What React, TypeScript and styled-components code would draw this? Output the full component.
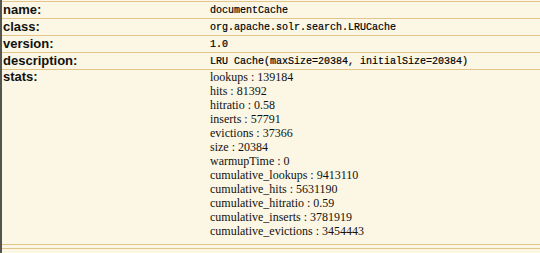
import React from 'react';
import styled, { createGlobalStyle } from 'styled-components';

const GlobalStyle = createGlobalStyle`
  html, body {
    margin: 0;
    padding: 0;
    background: #fcf7e4;
  }
`;

const Page = styled.div`
  width: 540px;
  height: 253px;
  overflow: hidden;
  padding-top: 1px;
  box-sizing: border-box;
  background: #fcf7e4;
  border-left: 2px solid #555550;
`;

const Table = styled.div`
  display: grid;
  grid-template-columns: 208px 1fr;
`;

const Label = styled.div<{ $tall?: boolean }>`
  border-top: 1px solid #e2c48c;
  border-bottom: ${p => (p.$tall ? '1px solid #e2c48c' : 'none')};
  height: ${p => (p.$tall ? 'auto' : '16px')};
  padding-left: 1px;
  font-family: "Liberation Sans", Arial, sans-serif;
  font-weight: bold;
  font-size: 13px;
  line-height: ${p => (p.$tall ? '14px' : '16px')};
  color: #111;
`;

const Value = styled.div`
  border-top: 1px solid #e2c48c;
  height: 16px;
  font-family: "Liberation Mono", "Courier New", monospace;
  font-size: 10px;
  line-height: 17px;
  color: #000;
  -webkit-text-stroke: 0.2px #000;
`;

const Stats = styled.div`
  border-top: 1px solid #e2c48c;
  border-bottom: 1px solid #e2c48c;
  padding-bottom: 6px;
  font-family: "Liberation Serif", "Times New Roman", serif;
  font-size: 12px;
  line-height: 14px;
  color: #111;
`;

const Spacer = styled.div`
  height: 3px;
  grid-column: 1 / span 2;
`;

const NextRow = styled.div`
  grid-column: 1 / span 2;
  border-top: 1px solid #e2c48c;
  height: 10px;
`;

const fields = [
  ['name:', 'documentCache'],
  ['class:', 'org.apache.solr.search.LRUCache'],
  ['version:', '1.0'],
  ['description:', 'LRU Cache(maxSize=20384, initialSize=20384)'],
];

const stats = [
  ['lookups', '139184'],
  ['hits', '81392'],
  ['hitratio', '0.58'],
  ['inserts', '57791'],
  ['evictions', '37366'],
  ['size', '20384'],
  ['warmupTime', '0'],
  ['cumulative_lookups', '9413110'],
  ['cumulative_hits', '5631190'],
  ['cumulative_hitratio', '0.59'],
  ['cumulative_inserts', '3781919'],
  ['cumulative_evictions', '3454443'],
];

const App: React.FC = () => {
  return (
    <Page>
      <GlobalStyle />
      <Table>
        {fields.map(([k, v]) => (
          <React.Fragment key={k}>
            <Label>{k}</Label>
            <Value>{v}</Value>
          </React.Fragment>
        ))}
        <Label $tall>stats:</Label>
        <Stats>
          {stats.map(([k, v]) => (
            <div key={k}>{k} : {v}</div>
          ))}
        </Stats>
        <Spacer />
        <NextRow />
      </Table>
    </Page>
  );
};

export default App;
